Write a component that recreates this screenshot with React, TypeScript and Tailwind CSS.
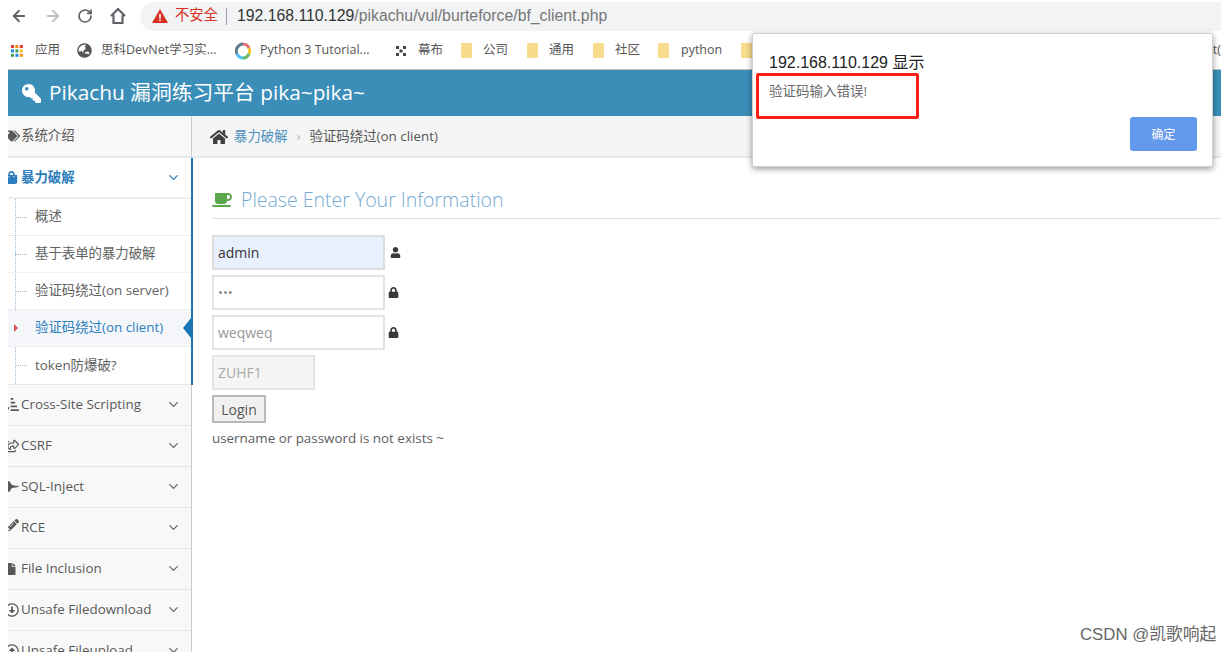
import { ArrowLeft, ArrowRight, ChevronDown, RotateCw } from "lucide-react";
import {
  FaCoffee,
  FaFile,
  FaFighterJet,
  FaGlobeAsia,
  FaHome,
  FaKey,
  FaLock,
  FaPencilAlt,
  FaRegArrowAltCircleDown,
  FaRegArrowAltCircleUp,
  FaRegShareSquare,
  FaShoppingBag,
  FaSortAmountDownAlt,
  FaTags,
  FaUser,
} from "react-icons/fa";
import type { ReactNode } from "react";

const subItems = ["概述", "基于表单的暴力破解", "验证码绕过(on server)", "验证码绕过(on client)", "token防爆破?"];

const menuItems: { label: string; icon: ReactNode }[] = [
  { label: "Cross-Site Scripting", icon: <FaSortAmountDownAlt size={15} className="shrink-0" /> },
  { label: "CSRF", icon: <FaRegShareSquare size={14} className="shrink-0" /> },
  { label: "SQL-Inject", icon: <FaFighterJet size={15} className="shrink-0" /> },
  { label: "RCE", icon: <FaPencilAlt size={12} className="shrink-0 -translate-y-[3px]" /> },
  { label: "File Inclusion", icon: <FaFile size={12} className="shrink-0 mr-[2px]" /> },
  { label: "Unsafe Filedownload", icon: <FaRegArrowAltCircleDown size={14} className="shrink-0" /> },
  { label: "Unsafe Fileupload", icon: <FaRegArrowAltCircleUp size={14} className="shrink-0" /> },
];

function Folder() {
  return <span className="w-[11px] h-[15px] rounded-[1px] bg-[#f8dc8e] shrink-0" />;
}

function Bookmark({ icon, label, className }: { icon: ReactNode; label: string; className: string }) {
  return (
    <div className={`flex items-center shrink-0 ${className}`}>
      {icon}
      <span className="text-[12.5px] text-[#555]">{label}</span>
    </div>
  );
}

function BookmarkBar() {
  return (
    <div className="h-[37px] flex items-center pl-[11px] bg-white whitespace-nowrap overflow-hidden">
      <Bookmark
        className="w-[66px] gap-[12px]"
        label="应用"
        icon={
          <svg width="12" height="12" viewBox="0 0 12 12" className="shrink-0">
            {["#e53935", "#fb8c00", "#e53935", "#1e88e5", "#43a047", "#fbc02d", "#43a047", "#1e88e5", "#fb8c00"].map((c, i) => (
              <rect key={i} x={(i % 3) * 4.4} y={Math.floor(i / 3) * 4.4} width="3" height="3" fill={c} />
            ))}
          </svg>
        }
      />
      <Bookmark
        className="w-[158px] gap-[9px]"
        label="思科DevNet学习实..."
        icon={<FaGlobeAsia size={15} className="text-[#555] shrink-0" />}
      />
      <Bookmark
        className="w-[161px] gap-[9px]"
        label="Python 3 Tutorial..."
        icon={
          <svg width="16" height="18" viewBox="0 0 16 18" fill="none" strokeWidth="3" className="shrink-0">
            <path d="M8 2a7 7 0 0 1 6 4" stroke="#e57373" />
            <path d="M14 6a7 7 0 0 1 0 6" stroke="#fbc02d" />
            <path d="M14 12a7 7 0 0 1-6 4" stroke="#66bb6a" />
            <path d="M8 16a7 7 0 0 1-6-4" stroke="#4fc3f7" />
            <path d="M2 12a7 7 0 0 1 6-10" stroke="#607d8b" />
          </svg>
        }
      />
      <Bookmark
        className="w-[65px] gap-[12px]"
        label="幕布"
        icon={
          <svg width="10" height="10" viewBox="0 0 10 10" fill="#444" className="shrink-0">
            <rect x="0" y="0" width="3" height="3" />
            <rect x="7" y="0" width="3" height="3" />
            <rect x="3.5" y="3.5" width="3" height="3" />
            <rect x="0" y="7" width="3" height="3" />
            <rect x="7" y="7" width="3" height="3" />
          </svg>
        }
      />
      <Bookmark className="w-[66px] gap-[11px]" label="公司" icon={<Folder />} />
      <Bookmark className="w-[66px] gap-[11px]" label="通用" icon={<Folder />} />
      <Bookmark className="w-[65px] gap-[11px]" label="社区" icon={<Folder />} />
      <Bookmark className="w-[83px] gap-[12px]" label="python" icon={<Folder />} />
      <Folder />
      <span className="ml-auto text-[12.5px] text-[#555]">t(</span>
    </div>
  );
}

function SideRow({ label, icon }: { label: string; icon: ReactNode }) {
  return (
    <div className="h-[41px] flex items-center pb-[1px] bg-[#f8f8f8] border-b border-[#e5e5e5] text-[13.4px] text-[#585858] whitespace-nowrap overflow-hidden">
      {/* the icon box is narrower than the icon, so the left edge gets cropped */}
      <span className="w-[11px] h-[20px] mr-[2px] shrink-0 flex items-center justify-end overflow-hidden">{icon}</span>
      <span className="flex-1">{label}</span>
      <ChevronDown size={15} className="mr-[10px] shrink-0 text-[#666]" />
    </div>
  );
}

function Sidebar() {
  return (
    <aside className="w-[184px] ml-[8px] shrink-0 h-full border-r border-[#ccc]">
      <div className="h-[42px] flex items-center pb-[1px] bg-[#f8f8f8] border-b-2 border-[#e8e8e8] text-[13.4px] text-[#585858] overflow-hidden">
        <FaTags size={14} className="-ml-[2px] shrink-0" />
        <span className="ml-[1px]">系统介绍</span>
      </div>
      <div className="border-r-2 border-r-[#1a76b4] -mr-[2px] bg-white overflow-hidden">
        <div className="h-[41px] flex items-center pb-[1px] border-b-2 border-[#eee] text-[13.4px] font-bold text-[#2b7dbc]">
          <FaShoppingBag size={13} className="-ml-[3px] shrink-0" />
          <span className="ml-[3px] flex-1">暴力破解</span>
          <ChevronDown size={15} className="mr-[10px]" />
        </div>
        <div className="relative border-b border-[#e5e5e5]">
          <span className="absolute left-[7px] top-0 bottom-0 border-l border-dotted border-[#9dbdd6]" />
          {subItems.map((item, i) => {
            const active = i === 3;
            return (
              <div
                key={item}
                className={`relative h-[37px] flex items-center pl-[27px] pb-[1px] text-[13.4px] border-b border-dotted border-[#e4e4e4] last:border-b-0 ${active ? "bg-[#f4f6fa] text-[#2b7dbc]" : "text-[#616161]"}`}
              >
                <span className={`absolute left-[7px] top-[18px] w-[12px] border-t border-dotted ${active ? "border-transparent" : "border-[#9dbdd6]"}`} />
                {active && <span className="absolute left-[6px] top-[14px] border-y-[4px] border-y-transparent border-l-[4px] border-l-[#d9534f]" />}
                {active && <span className="absolute right-0 top-[8px] border-y-[10px] border-y-transparent border-r-[8px] border-r-[#1a76b4]" />}
                {item}
              </div>
            );
          })}
        </div>
      </div>
      {menuItems.map((m) => (
        <SideRow key={m.label} {...m} />
      ))}
    </aside>
  );
}

function Field({ value, className, icon }: { value: string; className: string; icon?: ReactNode }) {
  return (
    <div className="flex items-center h-[35px] mb-[5px]">
      <div className={`h-full flex items-center pl-[4px] border-2 ${className}`}>{value}</div>
      {icon}
    </div>
  );
}

function Content() {
  return (
    <main className="flex-1 min-w-0">
      <div className="h-[42px] flex items-center pl-[18px] pt-[1px] bg-[#f5f5f5] border-b-2 border-[#e8e8e8] text-[13.4px]">
        <FaHome size={18} className="text-[#3f3f3f]" />
        <span className="ml-[6px] text-[#4c8fbd]">暴力破解</span>
        <span className="mx-[9px] text-[#b2b6bf]">›</span>
        <span className="text-[#555]">验证码绕过(on client)</span>
      </div>
      <div className="pl-[20px]">
        <h1 className="mt-[27px] h-[34px] pb-[4px] flex items-center border-b border-[#d5e3ef] text-[19.5px] font-light text-[#75a9d2]">
          <FaCoffee size={20} className="text-[#5aa64b] mr-[9px]" />
          Please Enter Your Information
        </h1>
        <div className="mt-[16px]">
          <Field
            value="admin"
            className="w-[173px] bg-[#e8f0fe] border-[#dedede] text-[#333] text-[14px]"
            icon={<FaUser size={11} className="ml-[5px] text-[#3a3a3a]" />}
          />
          <Field
            value="•••"
            className="w-[173px] bg-white border-[#e2e2e2] text-[#888] text-[13px]"
            icon={<FaLock size={11} className="ml-[3px] text-[#3a3a3a]" />}
          />
          <Field
            value="weqweq"
            className="w-[173px] bg-white border-[#e2e2e2] text-[#999] text-[14px]"
            icon={<FaLock size={11} className="ml-[3px] text-[#3a3a3a]" />}
          />
          <Field value="ZUHF1" className="w-[103px] bg-[#f5f5f5] border-[#e4e4e4] text-[#aaa] text-[14px]" />
        </div>
        <button className="w-[54px] h-[28px] border-2 border-[#b9b9b9] rounded-[1px] bg-[#f0f0f0] text-[14px] text-[#555]">
          Login
        </button>
        <p className="mt-[5px] text-[13.4px] text-[#5e5e5e]">username or password is not exists ~</p>
      </div>
    </main>
  );
}

export default function App() {
  return (
    <div className="relative w-[1231px] h-[652px] overflow-hidden bg-white font-['Open_Sans','Noto_Sans_CJK_SC',sans-serif]">
      <div className="w-[1221px] h-full">
        <div className="h-[32px] flex items-center bg-white">
          <ArrowLeft size={18} strokeWidth={2.4} className="ml-[10px] text-[#5f6368]" />
          <ArrowRight size={18} strokeWidth={2.4} className="ml-[16px] text-[#bdc1c6]" />
          <RotateCw size={16} strokeWidth={2.6} className="ml-[15px] text-[#5f6368]" />
          <svg width="18" height="18" viewBox="0 0 18 18" fill="none" stroke="#5f6368" strokeWidth="2.2" className="ml-[16px]">
            <path d="M2 9 9 2l7 7M4.5 8v8h9V8" />
          </svg>
          <div className="ml-[13px] flex-1 h-[29px] flex items-center rounded-l-full bg-[#f1f3f4] pl-[12px] text-[15.8px] font-['Liberation_Sans','Noto_Sans_CJK_SC',sans-serif]">
            <svg width="16" height="14" viewBox="0 0 16 14" className="shrink-0">
              <path d="M8 0 16 14H0Z" fill="#d93025" />
              <rect x="7.2" y="5" width="1.6" height="4.5" fill="#fff" />
              <rect x="7.2" y="10.5" width="1.6" height="1.6" fill="#fff" />
            </svg>
            <span className="ml-[7px] text-[#d93025] text-[14.3px]">不安全</span>
            <span className="ml-[8px] mr-[10px] h-[17px] border-l border-[#9aa0a6]" />
            <span className="text-[#333]">192.168.110.129</span>
            <span className="text-[#777]">/pikachu/vul/burteforce/bf_client.php</span>
          </div>
        </div>
        <BookmarkBar />
        <div className="ml-[8px] h-[47px] flex items-center pl-[14px] bg-[#3a8eb8] border-t border-[#c4c4c4] text-[20.8px] text-white">
          <FaKey size={19} className="scale-x-[-1] mr-[8px]" />
          Pikachu 漏洞练习平台 pika~pika~
        </div>
        <div className="flex h-[536px]">
          <Sidebar />
          <Content />
        </div>
      </div>

      <div className="absolute left-[752px] top-[33px] w-[461px] h-[134px] bg-white rounded-[2px] border border-[#d0d0d0] shadow-[0_2px_6px_rgba(0,0,0,0.4)]">
        <p className="absolute left-[16px] top-[17px] text-[16px] text-[#222] font-['Liberation_Sans','Noto_Sans_CJK_SC',sans-serif]">192.168.110.129 显示</p>
        <p className="absolute left-[16px] top-[47px] text-[13.5px] text-[#6b6b6b]">验证码输入错误!</p>
        <button className="absolute right-[15px] top-[83px] w-[67px] h-[34px] pt-[1px] rounded-[3px] bg-[#6399ed] text-[12px] text-white">确定</button>
      </div>
      <div className="absolute left-[756px] top-[73px] w-[163px] h-[46px] border-[3px] border-[#fb1f14] rounded-[2px]" />
      <span className="absolute left-[1080px] top-[622px] text-[16.8px] text-[#666] font-['Liberation_Sans','Noto_Sans_CJK_SC',sans-serif]">CSDN @凯歌响起</span>
    </div>
  );
}
